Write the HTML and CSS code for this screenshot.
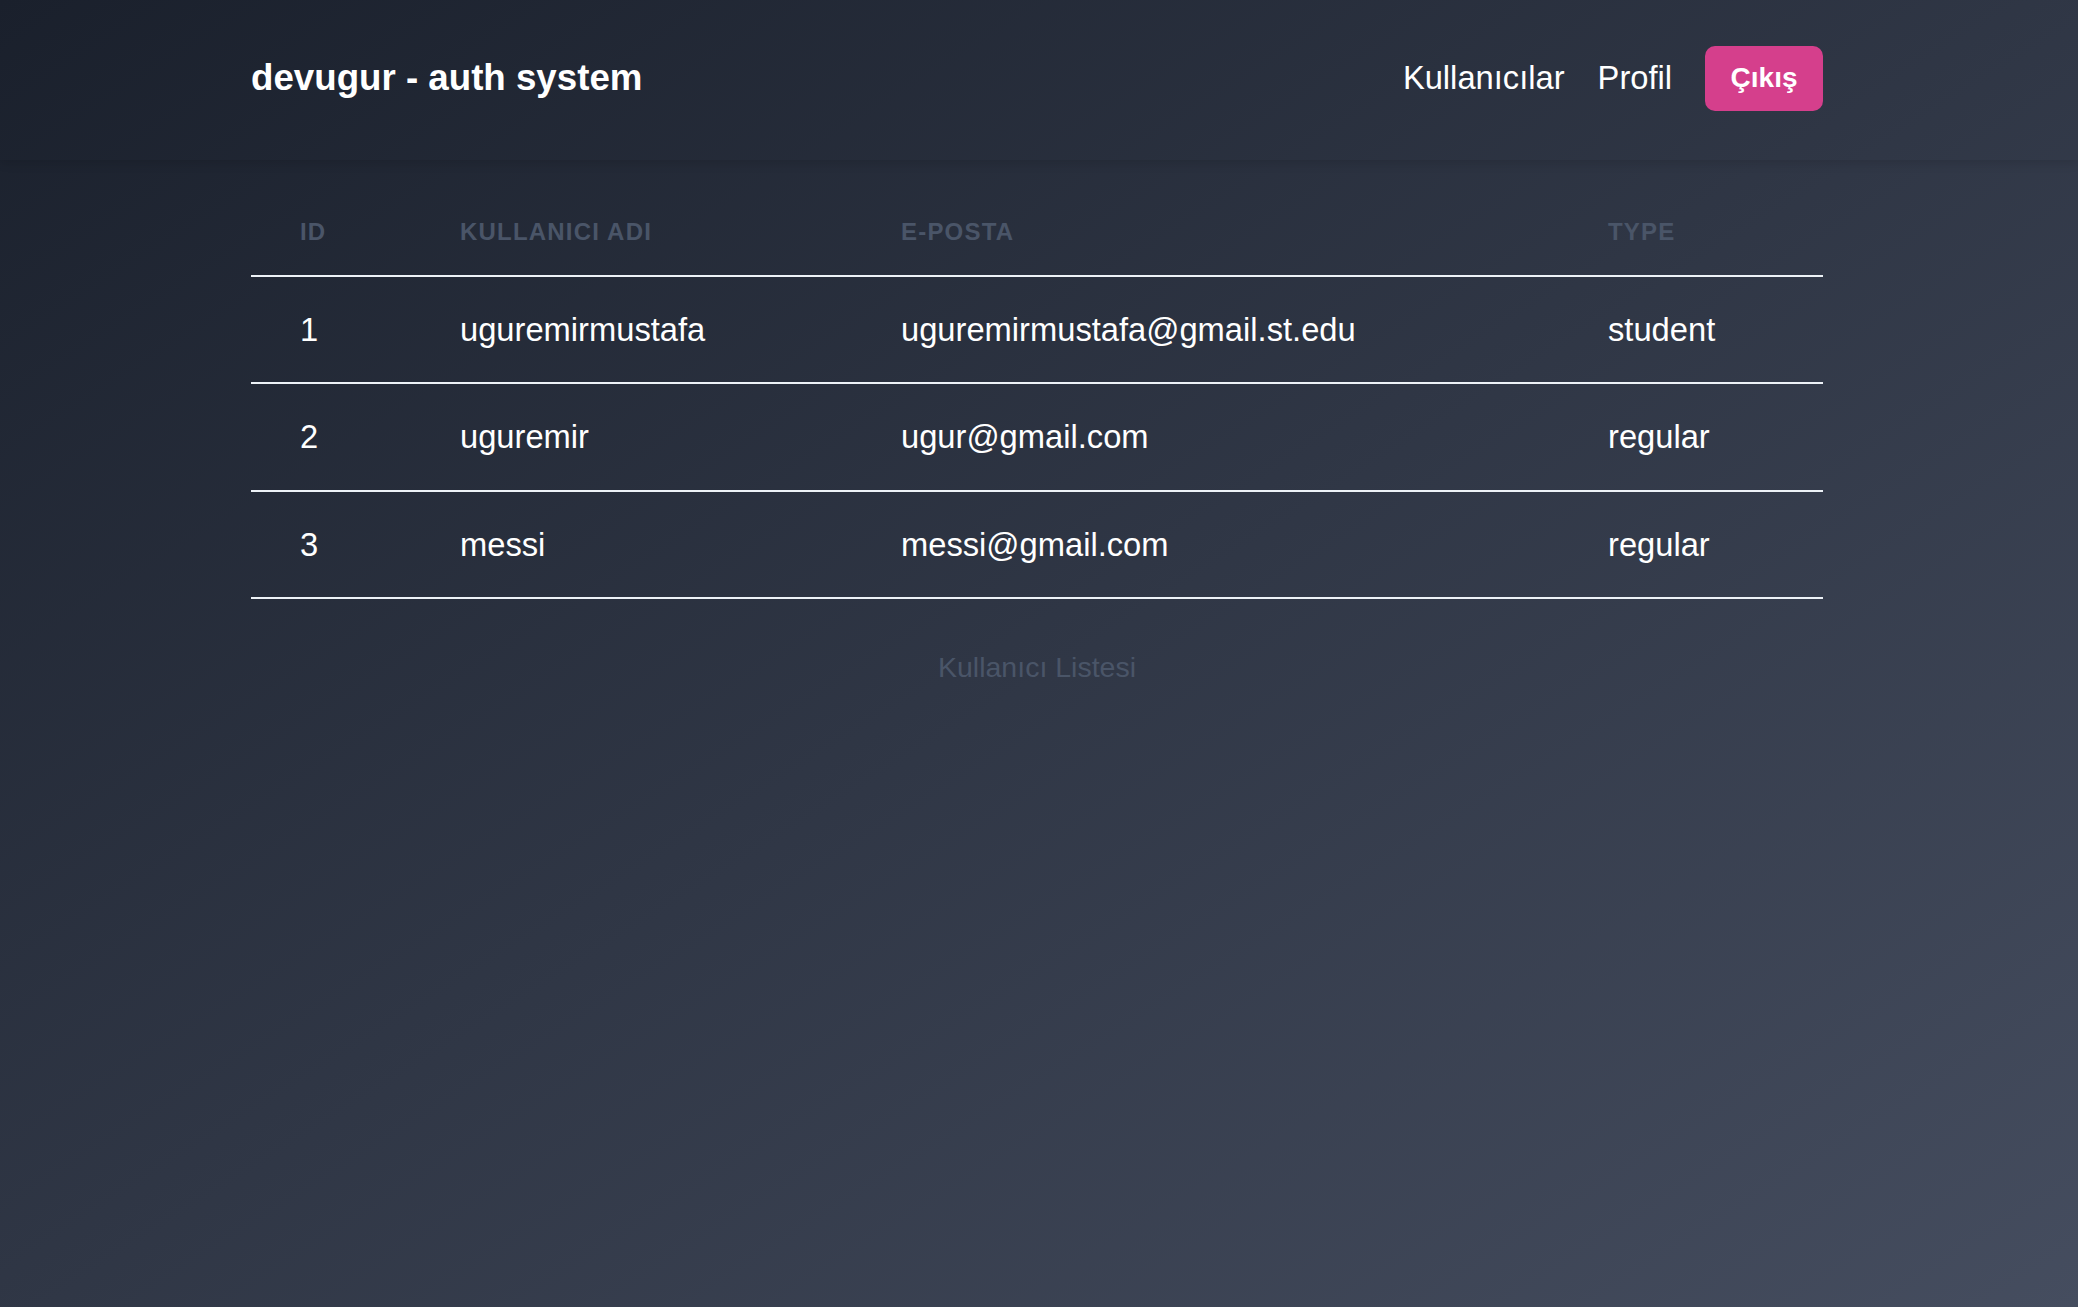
FILE: index.html
```html
<!DOCTYPE html>
<html lang="tr">
<head>
<meta charset="utf-8">
<title>devugur - auth system</title>
<link rel="stylesheet" href="styles.css">
</head>
<body>
<header class="topbar">
  <div class="topbar-inner">
    <div class="brand">devugur - auth system</div>
    <nav class="nav">
      <a class="nav-link" href="#">Kullanıcılar</a>
      <a class="nav-link" href="#">Profil</a>
      <button class="logout" type="button">Çıkış</button>
    </nav>
  </div>
</header>
<main class="content">
  <table class="users">
    <colgroup>
      <col class="c-id">
      <col class="c-name">
      <col class="c-mail">
      <col class="c-type">
    </colgroup>
    <thead>
      <tr>
        <th>ID</th>
        <th>Kullanıcı Adı</th>
        <th>E-Posta</th>
        <th>Type</th>
      </tr>
    </thead>
    <tbody>
      <tr><td>1</td><td>uguremirmustafa</td><td>uguremirmustafa@gmail.st.edu</td><td>student</td></tr>
      <tr><td>2</td><td>uguremir</td><td>ugur@gmail.com</td><td>regular</td></tr>
      <tr><td>3</td><td>messi</td><td>messi@gmail.com</td><td>regular</td></tr>
    </tbody>
    <caption class="caption">Kullanıcı Listesi</caption>
  </table>
</main>
</body>
</html>
```

FILE: styles.css
```css
* { box-sizing: border-box; }

html, body {
  margin: 0;
  padding: 0;
}

body {
  min-height: 100vh;
  padding-right: 4px;
  background: linear-gradient(to bottom right, #1a202c 0%, #454d5f 100%);
  color: #ffffff;
  font-family: "Liberation Sans", Arial, sans-serif;
}

.topbar {
  height: 160px;
  padding-bottom: 4px;
  margin-right: -4px;
  padding-right: 4px;
  box-shadow: 0 3px 10px rgba(0, 0, 0, 0.12);
}

.topbar-inner {
  width: 1572px;
  height: 100%;
  margin: 0 auto;
  display: flex;
  align-items: center;
  justify-content: space-between;
}

.brand {
  font-size: 36.7px;
  font-weight: 700;
  line-height: 1.15;
}

.nav {
  display: flex;
  align-items: center;
  gap: 33px;
}

.nav-link {
  color: #ffffff;
  text-decoration: none;
  font-size: 32.7px;
  line-height: 1.15;
}

.logout {
  height: 65px;
  padding: 0 25.5px;
  border: none;
  border-radius: 10px;
  background: #d53f8c;
  color: #ffffff;
  font-family: "Liberation Sans", Arial, sans-serif;
  font-size: 28px;
  font-weight: 700;
  cursor: pointer;
}

.content {
  width: 1572px;
  margin: 0 auto;
  padding-top: 28.5px;
}

.users {
  width: 100%;
  table-layout: fixed;
  border-collapse: collapse;
}

.c-id { width: 160px; }
.c-name { width: 441px; }
.c-mail { width: 707px; }
.c-type { width: 264px; }

.users th {
  text-align: left;
  padding: 31px 49px;
  font-size: 24px;
  line-height: 24px;
  font-weight: 700;
  letter-spacing: 0.05em;
  text-transform: uppercase;
  color: #4a5568;
  border-bottom: 2px solid #edf2f7;
}

.users td {
  text-align: left;
  padding: 28px 49px;
  font-size: 32.7px;
  line-height: 49.5px;
  color: #ffffff;
  border-bottom: 2px solid #edf2f7;
  white-space: nowrap;
}

.caption {
  caption-side: bottom;
  padding-top: 46.5px;
  font-size: 28.5px;
  line-height: 43px;
  font-weight: 500;
  color: #4a5568;
  text-align: center;
}
```
